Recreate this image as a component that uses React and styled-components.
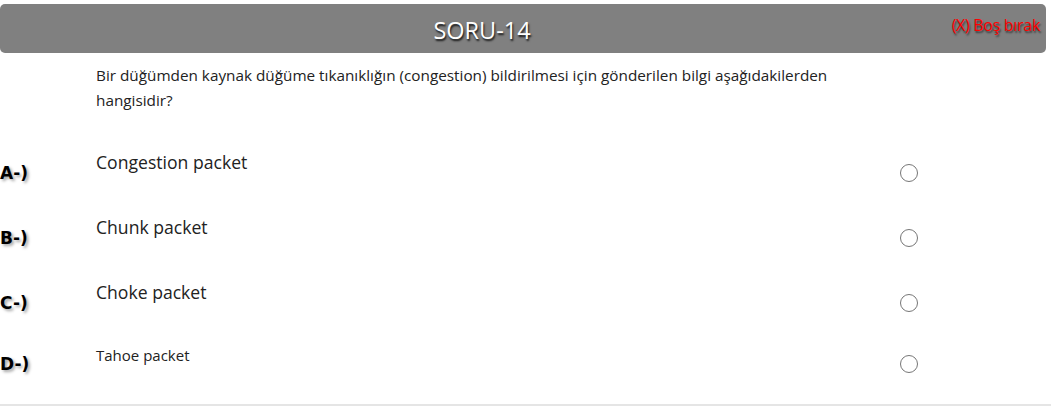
import React from "react";
import styled, { createGlobalStyle } from "styled-components";

const GlobalStyle = createGlobalStyle`
  body {
    margin: 0;
    background: #fff;
    font-family: "Open Sans", "Noto Sans", sans-serif;
  }
`;

const Page = styled.div`
  width: 1051px;
  height: 410px;
  padding-top: 4px;
  box-sizing: border-box;
  overflow: hidden;
`;

const Header = styled.div`
  width: 1046px;
  height: 49px;
  background: #808080;
  border-radius: 5px;
  display: grid;
  grid-template-columns: 1fr 82px;
  box-sizing: border-box;
`;

const Title = styled.div`
  color: #fff;
  font-size: 23.5px;
  line-height: 52px;
  text-align: center;
  text-shadow: 1px 2px 2px rgba(0, 0, 0, 0.85);
`;

const Skip = styled.div`
  display: flex;
  justify-content: flex-end;
  color: #ff0000;
  font-size: 16px;
  line-height: 20px;
  padding-top: 11px;
  padding-right: 6px;
  white-space: nowrap;
  letter-spacing: -0.3px;
  text-shadow: 1px 2px 2px rgba(0, 0, 0, 0.6);
  cursor: pointer;
`;

const Question = styled.p`
  margin: 10px 0 0;
  padding-left: 96px;
  width: 760px;
  font-size: 15.3px;
  line-height: 25px;
  color: #222;
`;

const Options = styled.div`
  margin-top: 27px;
  border-bottom: 2px solid #e5e5e5;
  padding-bottom: 11px;
`;

const Row = styled.label`
  display: grid;
  grid-template-columns: 96px 1fr 18px;
  padding-right: 133px;
  height: ${(p) => (p.$last ? 58 : 65)}px;
  align-items: center;
  cursor: pointer;
`;

const Letter = styled.span`
  font-family: "DejaVu Sans", Verdana, sans-serif;
  font-size: 17px;
  font-weight: 700;
  color: #000;
  text-shadow: 2px 2px 3px rgba(0, 0, 0, 0.35);
`;

const Text = styled.span`
  align-self: start;
  padding-top: 10px;
  font-size: ${(p) => (p.$small ? 15 : 17.6)}px;
  line-height: ${(p) => (p.$small ? 20 : 24)}px;
  color: #222;
`;

const Radio = styled.input`
  appearance: none;
  margin: 0;
  width: 18px;
  height: 18px;
  border: 1.5px solid #767676;
  border-radius: 50%;
  box-sizing: border-box;
  cursor: pointer;

  &:checked {
    border-color: #0075ff;
    box-shadow: inset 0 0 0 3px #fff;
    background: #0075ff;
  }
`;

const options = [
  { key: "A", text: "Congestion packet" },
  { key: "B", text: "Chunk packet" },
  { key: "C", text: "Choke packet" },
  { key: "D", text: "Tahoe packet", small: true },
];

export default function App() {
  return (
    <Page>
      <GlobalStyle />
      <Header>
        <Title>SORU-14</Title>
        <Skip>(X) Boş bırak</Skip>
      </Header>
      <Question>
        Bir düğümden kaynak düğüme tıkanıklığın (congestion) bildirilmesi için
        gönderilen bilgi aşağıdakilerden hangisidir?
      </Question>
      <Options>
        {options.map((o, i) => (
          <Row key={o.key} $last={i === options.length - 1}>
            <Letter>{o.key}-)</Letter>
            <Text $small={o.small}>{o.text}</Text>
            <Radio type="radio" name="soru14" value={o.key} />
          </Row>
        ))}
      </Options>
    </Page>
  );
}
